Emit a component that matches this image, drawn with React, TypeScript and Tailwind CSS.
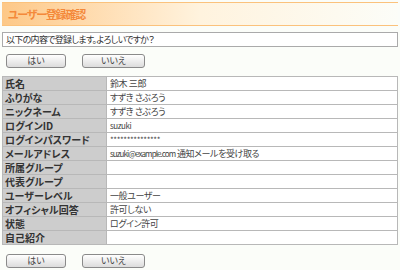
import React from "react";

const rows: [string, React.ReactNode][] = [
  ["氏名", "鈴木 三郎"],
  ["ふりがな", "すずき さぶろう"],
  ["ニックネーム", "すずき さぶろう"],
  ["ログインID", <span className="text-[8px] tracking-[-0.4px]">suzuki</span>],
  ["ログインパスワード", <span className="text-[8px]">***************</span>],
  [
    "メールアドレス",
    <>
      <span className="text-[8px] tracking-[-0.9px]">suzuki@example.com</span> 通知メールを受け取る
    </>,
  ],
  ["所属グループ", ""],
  ["代表グループ", ""],
  ["ユーザーレベル", "一般ユーザー"],
  ["オフィシャル回答", "許可しない"],
  ["状態", "ログイン許可"],
  ["自己紹介", ""],
];

function Buttons() {
  return (
    <div className="flex gap-[16px] pl-[4px]">
      <button className="w-[60px] h-[14px] rounded-[3px] border border-[#8a8a8a] bg-gradient-to-b from-white to-[#dcdcdc] text-[9px] leading-[12px] text-[#444]">
        はい
      </button>
      <button className="w-[63px] h-[14px] rounded-[3px] border border-[#8a8a8a] bg-gradient-to-b from-white to-[#dcdcdc] text-[9px] leading-[12px] text-[#444]">
        いいえ
      </button>
    </div>
  );
}

export default function App() {
  return (
    <div
      className="w-[400px] h-[270px] bg-[#fbfdf9] pt-[2px] px-[2px] text-[#333] [font-feature-settings:'palt']"
      style={{ fontFamily: '"Noto Sans CJK JP", "Liberation Sans", sans-serif' }}
    >
      {/* title bar */}
      <div className="h-[24px] border-y border-[#fbc27c] bg-gradient-to-r from-[#fdc887] via-[#fff3de] via-50% to-[#fcfdf8] flex items-center pl-[6px]">
        <span className="text-[11px] font-bold text-[#f4893a] tracking-[-1.2px]">ユーザー登録確認</span>
      </div>

      {/* message */}
      <div className="mt-[6px] h-[15px] border border-[#aaa] bg-white flex items-center pl-[3px] text-[9px] tracking-[-0.7px] text-[#333]">
        以下の内容で登録します。よろしいですか？
      </div>

      <div className="mt-[7px]">
        <Buttons />
      </div>

      {/* details */}
      <table className="mt-[8px] w-[396px] border-collapse">
        <tbody>
          {rows.map(([label, value]) => (
            <tr key={label} className="h-[14px]">
              <td className="w-[104px] border border-[#b8b8b8] bg-[#cdcdcd] pl-[2px] text-[10px] font-bold text-[#333] leading-[12px]">
                {label}
              </td>
              <td className="border border-[#b8b8b8] bg-white pl-[3px] text-[9px] tracking-[-0.4px] text-[#444] leading-[12px]">
                {value}
              </td>
            </tr>
          ))}
        </tbody>
      </table>

      <div className="mt-[9px]">
        <Buttons />
      </div>
    </div>
  );
}
